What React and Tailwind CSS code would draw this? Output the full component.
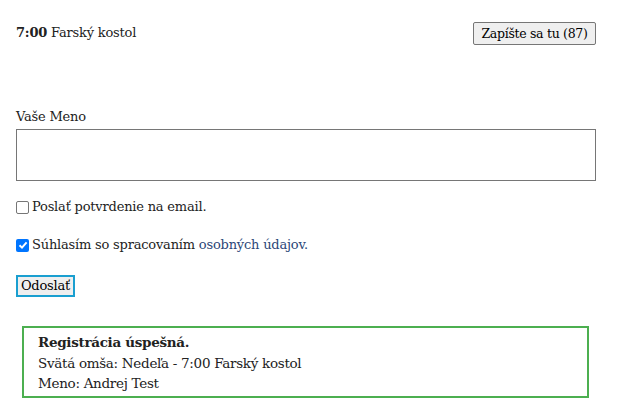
export default function App() {
  return (
    <div className="w-[629px] h-[417px] bg-white text-[#222] font-['DejaVu_Serif',serif] text-[13px] leading-[20px] tracking-[-0.2px]">
      <div className="pl-4 w-[596px]">
        <div className="flex justify-between items-start pt-[22px] h-[45px]">
          <div className="pt-[1px]"><b className="font-bold">7:00</b> Farský kostol</div>
          <button className="h-[23px] w-[123px] px-[4px] border border-[#767676] rounded-[2px] bg-[#efefef] text-black text-[12.5px] tracking-[-0.3px] leading-[20px] whitespace-nowrap">Zapíšte sa tu (87)</button>
        </div>
        <div className="mt-[62px] leading-[20px]">Vaše Meno</div>
        <div className="mt-[2px] h-[52px] w-[580px] border border-[#767676]"></div>
        <label className="flex items-center mt-[18px] h-[16px]">
          <span className="w-[13px] h-[13px] border border-[#767676] rounded-[2px] bg-white mr-[3px]"></span>
          <span>Poslať potvrdenie na email.</span>
        </label>
        <label className="flex items-center mt-[22px] h-[16px]">
          <span className="w-[13px] h-[13px] rounded-[2px] bg-[#0075ff] mr-[3px] flex items-center justify-center">
            <svg width="10" height="10" viewBox="0 0 10 10"><path d="M1.5 5.2 L4 7.6 L8.6 2.4" stroke="white" strokeWidth="2" fill="none" /></svg>
          </span>
          <span>Súhlasím so spracovaním <span className="text-[#2c4677]">osobných údajov.</span></span>
        </label>
        <button className="mt-[22px] h-[22px] w-[59px] border-2 border-[#1a9fd0] bg-[#efefef] text-black text-[13px] leading-[18px] block">Odoslať</button>
        <div className="mt-[29px] ml-[6px] w-[567px] h-[72px] border-2 border-[#4caf50] pl-[14px] pt-[4px] text-[13.5px] tracking-[-0.3px] leading-[20.5px]">
          <div className="font-bold">Registrácia úspešná.</div>
          <div>Svätá omša: Nedeľa - 7:00 Farský kostol</div>
          <div>Meno: Andrej Test</div>
        </div>
      </div>
    </div>
  );
}
